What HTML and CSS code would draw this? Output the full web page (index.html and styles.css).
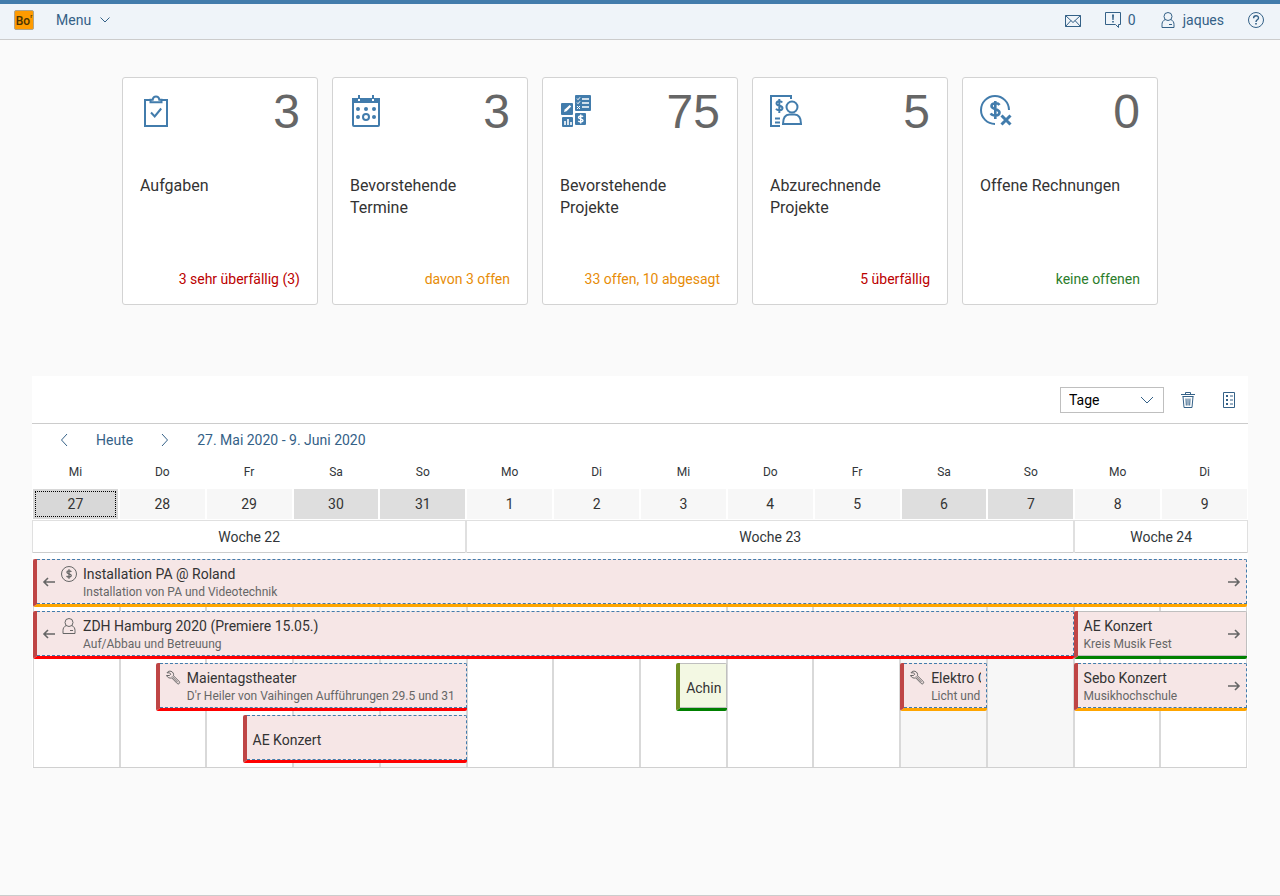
FILE: index.html
```html
<!DOCTYPE html>
<html lang="de">
<head>
<meta charset="utf-8">
<meta name="viewport" content="width=device-width, initial-scale=1">
<title>Übersicht</title>
<link rel="stylesheet" href="styles.css">
</head>
<body class="page">
<svg class="sprite" aria-hidden="true">
  <symbol id="i-person" viewBox="0 0 16 16"><g fill="none" stroke="currentColor"><circle cx="8" cy="4.5" r="4"/><path d="M5.200 7.500C2.800 8.700 2 10.400 2 12.500v3h12v-3c0-2.100-.8-3.800-3.200-5M9 12.500h3"/></g></symbol>
  <symbol id="i-wrench" viewBox="0 0 16 16"><path fill="none" stroke="currentColor" d="M1.500 5.500h3l1.200-1.300L4.500 2.800H2C3 1.200 4.500.9 6 1.300c2 .6 3 2.600 2.500 4.500l5.800 5.800c1.200 1.300-.8 3.200-2 2L6.700 7.900C4.800 8.500 2.600 7.800 1.500 5.500zM7 6.300l5.800 6"/></symbol>
  <symbol id="i-left" viewBox="0 0 14 14"><path fill="none" stroke="currentColor" stroke-width="1.600" d="M13 7H2M6 3 2 7l4 4"/></symbol>
  <symbol id="i-right" viewBox="0 0 14 14"><path fill="none" stroke="currentColor" stroke-width="1.600" d="M1 7h11M8 3l4 4-4 4"/></symbol>
</svg>

<header class="shell">
  <a class="logo" href="#" aria-label="Startseite">Bo<span class="logo-mark">r</span></a>
  <button class="shell-item menu" type="button">Menu
    <svg class="chevron" viewBox="0 0 10 6"><path d="M.5.500 5 5 9.500.500" fill="none" stroke="currentColor"/></svg>
  </button>
  <div class="shell-end">
    <button class="shell-item" type="button" aria-label="Nachrichten">
      <svg class="icon" viewBox="0 0 16 16"><path d="M.5 3.500h15v11H.5zM.5 3.500 8 10.500l7.500-7M.5 14.500l5.500-6M15.500 14.500l-5.500-6" fill="none" stroke="currentColor"/></svg>
    </button>
    <button class="shell-item" type="button">
      <svg class="icon" viewBox="0 0 16 16"><path d="M.5.500h15v12h-2v3l-3-3H.5z" fill="none" stroke="currentColor"/><path d="M7 2.500h2L8.600 8H7.400zM7.200 9h1.600v1.600H7.200z" fill="currentColor"/></svg>
      <span>0</span>
    </button>
    <button class="shell-item" type="button">
      <svg class="icon"><use href="#i-person"/></svg>
      <span>jaques</span>
    </button>
    <button class="shell-item" type="button" aria-label="Hilfe">
      <svg class="icon" viewBox="0 0 16 16"><circle cx="8" cy="8" r="7.500" fill="none" stroke="currentColor"/><path d="M5.600 6.200c0-3.400 4.900-3.200 4.900-.3C10.500 7.800 8 7.900 8 10" fill="none" stroke="currentColor" stroke-width="1.400"/><path d="M7.200 11h1.600v1.600H7.200z" fill="currentColor"/></svg>
    </button>
  </div>
</header>

<main class="content">
  <section class="tiles" aria-label="Kennzahlen">
    <a class="tile" href="#">
      <span class="tile-head">
        <svg class="tile-icon" viewBox="0 0 32 32"><path d="M10 5H5v26h22V5h-5" fill="none" stroke="currentColor" stroke-width="2"/><path d="M10.500 7.200V4.700h2.200C13.300.300 18.700.300 19.300 4.700h2.200v2.500z" fill="#fff" stroke="currentColor" stroke-width="2"/><path d="m11 17.500 3.700 4 6.500-8" fill="none" stroke="currentColor" stroke-width="2"/></svg>
        <span class="tile-value">3</span>
      </span>
      <span class="tile-title">Aufgaben</span>
      <span class="tile-note bad">3 sehr überfällig (3)</span>
    </a>
    <a class="tile" href="#">
      <span class="tile-head">
        <svg class="tile-icon" viewBox="0 0 32 32"><rect x="3" y="4" width="26" height="27" rx="1" fill="none" stroke="currentColor" stroke-width="2"/><path d="M2 3h28v5H2zM8 0h2v3H8zM22 0h2v3h-2z" fill="currentColor"/><path d="M8 4h2v2H8zM22 4h2v2h-2z" fill="#fff"/><g fill="currentColor"><circle cx="8" cy="14" r="2"/><circle cx="16" cy="14" r="2"/><circle cx="24" cy="14" r="2"/><circle cx="8" cy="22" r="2"/><circle cx="24" cy="22" r="2"/></g><circle cx="16" cy="22" r="3" fill="none" stroke="currentColor" stroke-width="2"/></svg>
        <span class="tile-value">3</span>
      </span>
      <span class="tile-title">Bevorstehende Termine</span>
      <span class="tile-note warn">davon 3 offen</span>
    </a>
    <a class="tile" href="#">
      <span class="tile-head">
        <svg class="tile-icon" viewBox="0 0 32 32"><g fill="currentColor"><rect x="1" y="8" width="12" height="12" rx="1"/><rect x="15" y="0" width="16" height="16" rx="1"/><rect x="2" y="22" width="11" height="10" rx="1"/><rect x="15" y="18" width="11" height="12" rx="1"/></g><path d="m4 17 .7-2.600 5-4.400 1.500 1.500-4.700 4.800z" fill="#fff"/><path d="M5 30v-4M8 30v-6M11 30v-3" stroke="#fff" stroke-width="1.600"/><path d="M22 4h7M22 8h7M22 12h7" stroke="#fff" stroke-width="1.600"/><path d="m17 3.500 1 1.200 2-2.400M17 7.500l1 1.200 2-2.400M17 11l3 3M20 11l-3 3" fill="none" stroke="#fff"/><path d="M23 21.700c-1-1.200-4.500-1-4.500.7s4.500 1.200 4.500 3-3.700 1.900-4.700.4M20.700 19.500v9" fill="none" stroke="#fff" stroke-width="1.400"/></svg>
        <span class="tile-value">75</span>
      </span>
      <span class="tile-title">Bevorstehende Projekte</span>
      <span class="tile-note warn">33 offen, 10 abgesagt</span>
    </a>
    <a class="tile" href="#">
      <span class="tile-head">
        <svg class="tile-icon" viewBox="0 0 32 32"><g fill="none" stroke="currentColor" stroke-width="2"><path d="M10 31H1V1h20v3M5 23.500h5M5 27.500h5"/><circle cx="22" cy="12" r="5.500"/><path d="M13 29c0-6 2.500-9.500 6.500-9.500h5c4 0 6.500 3.500 6.500 9.500z"/><path d="M12.200 7.500c-1.200-2-5.700-1.700-5.700.9 0 3 6 1.800 6 4.700 0 2.700-5 2.900-6.500.6M9.300 4v14"/></g></svg>
        <span class="tile-value">5</span>
      </span>
      <span class="tile-title">Abzurechnende Projekte</span>
      <span class="tile-note bad">5 überfällig</span>
    </a>
    <a class="tile" href="#">
      <span class="tile-head">
        <svg class="tile-icon" viewBox="0 0 32 32"><g fill="none" stroke="currentColor" stroke-width="2"><path d="M15 29A14 14 0 1 1 29 15"/><path stroke-width="2.600" d="M19.500 10c-1.500-2.600-8-2.400-8 1 0 4 8 2.400 8 6.500 0 3.800-7 3.800-8.800.8M15.300 6v18"/><path stroke-width="3" d="m21.500 20.500 9 9M30.500 20.500l-9 9"/></g></svg>
        <span class="tile-value">0</span>
      </span>
      <span class="tile-title">Offene Rechnungen</span>
      <span class="tile-note good">keine offenen</span>
    </a>
  </section>

  <section class="planner" aria-label="Kalender">
    <div class="toolbar">
      <div class="select">
        <select class="select-field" aria-label="Ansicht"><option>Tage</option><option>Wochen</option><option>Monate</option></select>
        <svg class="select-arrow" viewBox="0 0 14 8"><path d="M1 1l6 6 6-6" fill="none" stroke="currentColor"/></svg>
      </div>
      <button class="tool" type="button" aria-label="Löschen">
        <svg class="icon" viewBox="0 0 16 16"><path d="M1 2.500h14M5.500 2V.5h5V2M2.500 4.500h11M3 4.500l1 11h8l1-11M6 6.500l.3 7M8 6.500v7M10 6.500l-.3 7" fill="none" stroke="currentColor"/></svg>
      </button>
      <button class="tool" type="button" aria-label="Legende">
        <svg class="icon" viewBox="0 0 16 16"><path d="M2.500.500h11v15h-11z" fill="none" stroke="currentColor"/><path d="M5 3h2v2H5zM5 7h2v2H5zM5 11h2v2H5z" fill="currentColor"/><path d="M9 4h3M9 8h3M9 12h3" stroke="currentColor"/></svg>
      </button>
    </div>

    <div class="nav">
      <button class="nav-step" type="button" aria-label="Zurück"><svg class="nav-icon" viewBox="0 0 8 14"><path d="M7 1 1.500 7 7 13" fill="none" stroke="currentColor"/></svg></button>
      <button class="nav-text" type="button">Heute</button>
      <button class="nav-step" type="button" aria-label="Weiter"><svg class="nav-icon" viewBox="0 0 8 14"><path d="M1 1l5.500 6L1 13" fill="none" stroke="currentColor"/></svg></button>
      <button class="nav-text" type="button">27. Mai 2020 - 9. Juni 2020</button>
    </div>

    <div class="names">
      <span>Mi</span><span>Do</span><span>Fr</span><span>Sa</span><span>So</span><span>Mo</span><span>Di</span><span>Mi</span><span>Do</span><span>Fr</span><span>Sa</span><span>So</span><span>Mo</span><span>Di</span>
    </div>
    <div class="days">
      <button class="day selected" type="button">27</button><button class="day" type="button">28</button><button class="day" type="button">29</button><button class="day weekend" type="button">30</button><button class="day weekend" type="button">31</button><button class="day" type="button">1</button><button class="day" type="button">2</button><button class="day" type="button">3</button><button class="day" type="button">4</button><button class="day" type="button">5</button><button class="day weekend" type="button">6</button><button class="day weekend" type="button">7</button><button class="day" type="button">8</button><button class="day" type="button">9</button>
    </div>
    <div class="weeks">
      <span class="week days-5">Woche 22</span><span class="week days-7">Woche 23</span><span class="week days-2">Woche 24</span>
    </div>

    <div class="schedule">
      <div class="columns" aria-hidden="true">
        <span class="column"></span><span class="column"></span><span class="column"></span><span class="column off"></span><span class="column off"></span><span class="column"></span><span class="column"></span><span class="column"></span><span class="column"></span><span class="column"></span><span class="column off"></span><span class="column off"></span><span class="column"></span><span class="column"></span>
      </div>
      <!-- One grid track per hour: 14 days x 24 hours -->
      <div class="events">
        <article class="event tentative open" style="grid-area: 1 / 1 / 2 / 337">
          <div class="event-body">
            <svg class="arrow"><use href="#i-left"/></svg>
            <svg class="event-icon" viewBox="0 0 16 16"><circle cx="8" cy="8" r="7.500" fill="none" stroke="currentColor"/><path d="M10.300 5.900C9.500 4.400 5.900 4.500 5.900 6.300c0 2 4.400 1.200 4.400 3.300 0 1.900-3.800 1.900-4.700.3M8 3.300v9.400" fill="none" stroke="currentColor" stroke-width="1.300"/></svg>
            <div class="event-text"><h3 class="event-title">Installation PA @ Roland</h3><p class="event-sub">Installation von PA und Videotechnik</p></div>
            <svg class="arrow"><use href="#i-right"/></svg>
          </div>
        </article>
        <article class="event tentative late" style="grid-area: 2 / 1 / 3 / 289">
          <div class="event-body">
            <svg class="arrow"><use href="#i-left"/></svg>
            <svg class="event-icon"><use href="#i-person"/></svg>
            <div class="event-text"><h3 class="event-title">ZDH Hamburg 2020 (Premiere 15.05.)</h3><p class="event-sub">Auf/Abbau und Betreuung</p></div>
          </div>
        </article>
        <article class="event done" style="grid-area: 2 / 289 / 3 / 337">
          <div class="event-body">
            <div class="event-text"><h3 class="event-title">AE Konzert</h3><p class="event-sub">Kreis Musik Fest</p></div>
            <svg class="arrow"><use href="#i-right"/></svg>
          </div>
        </article>
        <article class="event tentative late" style="grid-area: 3 / 35 / 4 / 121">
          <div class="event-body">
            <svg class="event-icon"><use href="#i-wrench"/></svg>
            <div class="event-text"><h3 class="event-title">Maientagstheater</h3><p class="event-sub">D'r Heiler von Vaihingen Aufführungen 29.5 und 31</p></div>
          </div>
        </article>
        <article class="event private done" style="grid-area: 3 / 179 / 4 / 193">
          <div class="event-body">
            <div class="event-text single"><h3 class="event-title">Achin</h3></div>
          </div>
        </article>
        <article class="event tentative open" style="grid-area: 3 / 241 / 4 / 265">
          <div class="event-body">
            <svg class="event-icon"><use href="#i-wrench"/></svg>
            <div class="event-text"><h3 class="event-title">Elektro C</h3><p class="event-sub">Licht und</p></div>
          </div>
        </article>
        <article class="event tentative open" style="grid-area: 3 / 289 / 4 / 337">
          <div class="event-body">
            <div class="event-text"><h3 class="event-title">Sebo Konzert</h3><p class="event-sub">Musikhochschule</p></div>
            <svg class="arrow"><use href="#i-right"/></svg>
          </div>
        </article>
        <article class="event tentative late" style="grid-area: 4 / 59 / 5 / 121">
          <div class="event-body">
            <div class="event-text single"><h3 class="event-title">AE Konzert</h3></div>
          </div>
        </article>
      </div>
    </div>
  </section>
</main>
</body>
</html>
```

FILE: styles.css
```css
* { box-sizing: border-box; }

.page {
  margin: 0;
  min-height: 100vh;
  background: #fafafa;
  border-bottom: 1px solid #ccc;
  color: #32363a;
  font: 14px/20px Roboto, "Liberation Sans", sans-serif;
}

button, select { font: inherit; color: inherit; }
button { margin: 0; padding: 0; border: 0; background: none; cursor: pointer; }
h3, p { margin: 0; font-weight: 400; }
.sprite { display: none; }
.icon { width: 16px; height: 16px; flex: none; }

/* Shell bar */
.shell {
  display: flex;
  align-items: center;
  height: 40px;
  padding: 0 16px 0 14px;
  background: #eff4f9;
  box-shadow: inset 0 4px #427cac;
  border-bottom: 1px solid #ccc;
  color: #346187;
}
.logo {
  display: flex;
  width: 20px;
  height: 20px;
  justify-content: center;
  border: 1px solid #b0a48a;
  border-radius: 2px;
  background: #ff9b00;
  color: #4a3200;
  font-size: 12px;
  line-height: 20px;
  font-weight: 500;
  text-decoration: none;
}
.logo-mark { font-size: 6px; line-height: 10px; }
.shell-item { display: flex; align-items: center; gap: 7px; height: 20px; }
.menu { margin-left: 22px; gap: 9px; }
.chevron { width: 10px; height: 6px; }
.shell-end { display: flex; gap: 24px; margin-left: auto; }

/* Tiles */
.tiles {
  display: flex;
  flex-wrap: wrap;
  justify-content: center;
  gap: 14px;
  padding: 37px 32px 71px;
}
.tile {
  display: flex;
  flex-direction: column;
  width: 196px;
  min-height: 228px;
  padding: 15px 17px;
  background: #fff;
  border: 1px solid #d3d3d3;
  border-radius: 3px;
  color: #333;
  text-decoration: none;
}
.tile-head { display: flex; justify-content: space-between; height: 82px; }
.tile-icon { width: 32px; height: 32px; margin-top: 2px; color: #427cac; }
.tile-value { color: #666; font: 48px/38px "Liberation Sans", sans-serif; }
.tile-title { font-size: 16px; line-height: 22px; }
.tile-note { margin-top: auto; text-align: right; }
.bad { color: #b00; }
.warn { color: #e78c07; }
.good { color: #2b7d2b; }

/* Planner */
.planner { margin: 0 32px; background: #fff; }
.toolbar {
  display: flex;
  align-items: center;
  justify-content: flex-end;
  gap: 5px;
  height: 48px;
  padding-right: 1px;
  border-bottom: 1px solid #ccc;
  color: #346187;
}
.select { position: relative; width: 104px; margin-right: 1px; }
.select-field {
  display: block;
  width: 100%;
  height: 26px;
  padding: 0 8px;
  border: 1px solid #bfbfbf;
  border-radius: 0;
  background: #fff;
  color: #000;
  appearance: none;
}
.select-arrow {
  position: absolute;
  top: 9px;
  right: 10px;
  width: 14px;
  height: 8px;
  pointer-events: none;
}
.tool { display: flex; justify-content: center; align-items: center; width: 36px; height: 26px; }

.nav { display: flex; align-items: center; height: 32px; padding-left: 14px; color: #346187; }
.nav-step { display: flex; justify-content: center; width: 36px; }
.nav-icon { width: 8px; height: 14px; }
.nav-text { padding: 0 14px; }

.names, .days, .weeks, .columns {
  display: grid;
  grid-template-columns: repeat(14, minmax(0, 1fr));
}
.names { height: 32px; font-size: 12px; line-height: 32px; text-align: center; }
.days { height: 32px; }
.day { margin: 1px; background: #f7f7f7; color: #333; text-align: center; }
.weekend { background: #dedede; }
.selected { background: #d8d8d8; outline: 1px dotted #000; outline-offset: -3px; }
.weeks { height: 33px; border-top: 1px solid #e0e0e0; border-bottom: 1px solid #ccc; line-height: 32px; text-align: center; }
.week { border-right: 1px solid #e0e0e0; border-left: 1px solid #e0e0e0; }
.days-5 { grid-column: span 5; }
.days-7 { grid-column: span 7; }
.days-2 { grid-column: span 2; }

.schedule { display: grid; margin: 6px 1px 0; border-bottom: 1px solid #d0d0d0; }
.columns, .events { grid-area: 1 / 1; }
.column { border-right: 1px solid #d9d9d9; border-left: 1px solid #d9d9d9; }
.off { background: #f7f7f7; }
.events {
  display: grid;
  grid-template-columns: repeat(336, minmax(0, 1fr));
  grid-auto-rows: 48px;
  row-gap: 4px;
  padding-bottom: 4px;
}
.event {
  display: flex;
  border-left: 4px solid #bf4545;
  border-bottom: 3px solid red;
  border-radius: 2px;
  background: #f6e6e6;
  overflow: hidden;
}
.event-body {
  display: flex;
  flex: 1;
  min-width: 0;
  align-items: center;
  padding: 0 5px;
  border: 1px solid #bfbfbf;
  border-left: 0;
}
.tentative .event-body { border-style: dashed; border-color: #427cac; border-left: 0; }
.open { border-bottom-color: orange; }
.done { border-bottom-color: green; }
.late { border-bottom-color: red; }
.private { border-left-color: #6f8f22; background: #f3f8e3; }
.arrow { flex: none; width: 14px; height: 14px; color: #666; }
.event-icon { flex: none; width: 16px; height: 16px; margin-right: 5px; align-self: flex-start; margin-top: 6px; color: #666; }
.arrow + .event-icon { margin-left: 5px; }
.event-text { flex: 1; min-width: 0; padding-left: 1px; overflow: hidden; white-space: nowrap; }
.single { padding-top: 4px; }
.event-title { color: #333; font-size: 14px; line-height: 20px; }
.event-sub { color: #666; font-size: 12px; line-height: 16px; }
```
